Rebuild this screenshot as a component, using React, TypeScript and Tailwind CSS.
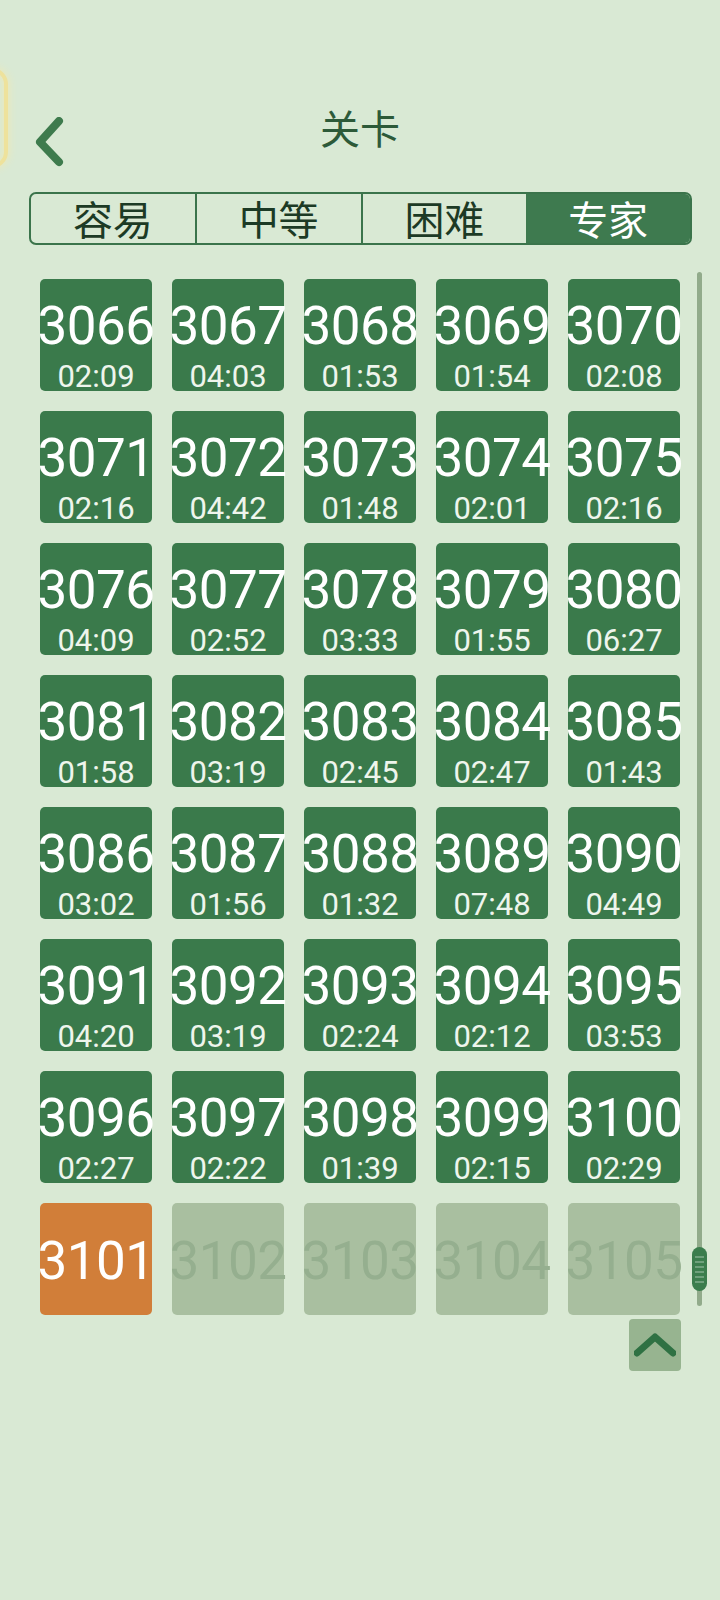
import React from "react";

const levels: { n: number; t?: string }[] = [
  { n: 3066, t: "02:09" }, { n: 3067, t: "04:03" }, { n: 3068, t: "01:53" }, { n: 3069, t: "01:54" }, { n: 3070, t: "02:08" },
  { n: 3071, t: "02:16" }, { n: 3072, t: "04:42" }, { n: 3073, t: "01:48" }, { n: 3074, t: "02:01" }, { n: 3075, t: "02:16" },
  { n: 3076, t: "04:09" }, { n: 3077, t: "02:52" }, { n: 3078, t: "03:33" }, { n: 3079, t: "01:55" }, { n: 3080, t: "06:27" },
  { n: 3081, t: "01:58" }, { n: 3082, t: "03:19" }, { n: 3083, t: "02:45" }, { n: 3084, t: "02:47" }, { n: 3085, t: "01:43" },
  { n: 3086, t: "03:02" }, { n: 3087, t: "01:56" }, { n: 3088, t: "01:32" }, { n: 3089, t: "07:48" }, { n: 3090, t: "04:49" },
  { n: 3091, t: "04:20" }, { n: 3092, t: "03:19" }, { n: 3093, t: "02:24" }, { n: 3094, t: "02:12" }, { n: 3095, t: "03:53" },
  { n: 3096, t: "02:27" }, { n: 3097, t: "02:22" }, { n: 3098, t: "01:39" }, { n: 3099, t: "02:15" }, { n: 3100, t: "02:29" },
  { n: 3101 }, { n: 3102 }, { n: 3103 }, { n: 3104 }, { n: 3105 },
];

const tabs = ["容易", "中等", "困难", "专家"];

export default function App() {
  return (
    <div
      className="relative w-[720px] h-[1600px] overflow-hidden bg-[#d9e9d4]"
      style={{ fontFamily: 'Roboto, "Noto Sans CJK SC", sans-serif' }}
    >
      {/* yellow edge glow */}
      <div className="absolute left-[-44px] top-[68px] w-[52px] h-[100px] rounded-[16px] border-[4px] border-[#eee29c] shadow-[0_0_8px_#f2e9b0,inset_0_0_6px_#f2e9b0]" />

      {/* header */}
      <div className="grid grid-cols-[1fr_auto_1fr] pt-[105px] h-[192px]">
        <div className="pl-[34px] pt-[12px]">
          <svg width="30" height="50" viewBox="0 0 30 50" className="block">
            <path d="M25 4 L6 25 L25 45" fill="none" stroke="#3e7b4d" strokeWidth="8" strokeLinecap="round" strokeLinejoin="round" />
          </svg>
        </div>
        <div
          className="text-[40px] leading-[44px] text-[#2d5a39]"
          style={{ fontFamily: '"Noto Sans CJK SC", sans-serif' }}
        >
          关卡
        </div>
        <div />
      </div>

      {/* tabs */}
      <div className="ml-[29px] w-[663px] h-[53px] flex border-2 border-[#3b744b] rounded-[7px]">
        {tabs.map((t, i) => (
          <div
            key={t}
            className={
              "flex-1 flex items-center justify-center text-[40px] leading-[49px] " +
              (i === 3 ? "bg-[#3e7a4f] text-white rounded-r-[5px]" : "text-[#1c3a25]") +
              (i > 0 && i < 3 ? " border-l-2 border-[#3b744b]" : "")
            }
            style={{ fontFamily: '"Noto Sans CJK SC", sans-serif' }}
          >
            {t}
          </div>
        ))}
      </div>

      {/* level grid */}
      <div className="ml-[40px] mt-[34px] grid grid-cols-[repeat(5,112px)] gap-x-[20px] gap-y-[20px]">
        {levels.map((l) => {
          const done = !!l.t;
          const current = l.n === 3101;
          const bg = done ? "bg-[#3a7a4b]" : current ? "bg-[#d17e39]" : "bg-[#a9bfa0]";
          return (
            <div
              key={l.n}
              className={"h-[112px] rounded-[5px] flex flex-col items-center overflow-visible " + bg + (done ? " pt-[22px]" : " justify-center pt-[4px]")}
            >
              <div
                className={
                  "text-[53px] leading-[50px] whitespace-nowrap tracking-[-0.5px] " +
                  (done || current ? "text-white" : "text-[#95af8f]")
                }
              >
                {l.n}
              </div>
              {done && (
                <div className="mt-[12px] text-[31px] leading-[28px] text-[#eef5ec]">{l.t}</div>
              )}
            </div>
          );
        })}
      </div>

      {/* up button */}
      <div className="flex justify-end pr-[39px] mt-[4px]">
        <div className="w-[52px] h-[52px] rounded-[4px] bg-[#97b490] flex items-center justify-center">
          <svg width="42" height="28" viewBox="0 0 42 28" className="block">
            <path d="M3 22 L21 6 L39 22" fill="none" stroke="#2f7143" strokeWidth="7" strokeLinecap="round" strokeLinejoin="round" />
          </svg>
        </div>
      </div>

      {/* scrollbar */}
      <div className="absolute left-[697px] top-[272px] w-[5px] h-[1034px] rounded-full bg-[#92ab8b]" />
      <div className="absolute left-[692px] top-[1247px] w-[15px] h-[44px] rounded-full bg-[#3b7d4d] flex flex-col items-center justify-center gap-[3px]">
        {[0, 1, 2, 3, 4, 5].map((i) => (
          <div key={i} className="w-[9px] h-[2px] bg-[#6fa07c]" />
        ))}
      </div>
    </div>
  );
}
